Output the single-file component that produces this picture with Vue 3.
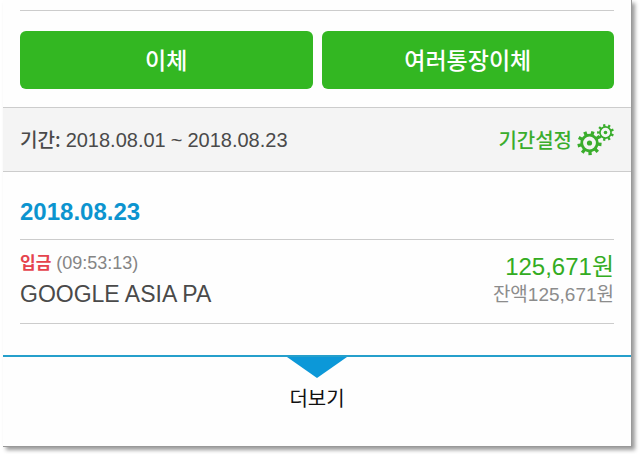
<script setup>
const period = { from: '2018.08.01', to: '2018.08.23' }

const days = [
  {
    date: '2018.08.23',
    items: [
      { type: '입금', time: '09:53:13', name: 'GOOGLE ASIA PA', amount: '125,671원', balance: '125,671원' },
    ],
  },
]

// Outline of a gear centred on (cx, cy), with flat-topped teeth.
function gear(cx, cy, outer, root, teeth, turn) {
  const step = (Math.PI * 2) / teeth
  const points = []
  for (let i = 0; i < teeth; i++) {
    const a = i * step + turn
    for (const [r, offset] of [[root, -0.25], [outer, -0.2], [outer, 0.2], [root, 0.25]]) {
      const t = a + offset * step
      points.push(`${(cx + r * Math.cos(t)).toFixed(2)} ${(cy + r * Math.sin(t)).toFixed(2)}`)
    }
  }
  return `M${points.join('L')}Z`
}

function hole(cx, cy, r) {
  return `M${cx - r} ${cy}a${r} ${r} 0 1 0 ${2 * r} 0a${r} ${r} 0 1 0 ${-2 * r} 0Z`
}

const bigGear = gear(12.5, 19, 12.2, 9.2, 9, 0.12) + hole(12.5, 19, 6.4)
const smallGear = gear(28.5, 8.5, 8.5, 6.4, 9, 0.35) + hole(28.5, 8.5, 4.7)
</script>

<template>
  <main class="card">
    <nav class="actions">
      <button type="button" class="action">이체</button>
      <button type="button" class="action">여러통장이체</button>
    </nav>

    <section class="filter">
      <p class="period">
        <strong>기간:</strong>
        <span>{{ period.from }}</span>
        <span>~</span>
        <span>{{ period.to }}</span>
      </p>
      <button type="button" class="settings">
        기간설정
        <svg class="gears" viewBox="0 0 37 32" aria-hidden="true">
          <path :d="bigGear" fill-rule="evenodd" />
          <circle cx="12.5" cy="19" r="2.6" />
          <path :d="smallGear" fill-rule="evenodd" />
          <circle cx="28.5" cy="8.5" r="1.8" />
        </svg>
      </button>
    </section>

    <section v-for="day in days" :key="day.date" class="day">
      <h2 class="date">{{ day.date }}</h2>
      <ul class="list">
        <li v-for="item in day.items" :key="item.time" class="item">
          <div class="detail">
            <p class="meta"><strong class="type">{{ item.type }}</strong> ({{ item.time }})</p>
            <p class="name">{{ item.name }}</p>
          </div>
          <div class="sums">
            <p class="amount">{{ item.amount }}</p>
            <p class="balance">잔액{{ item.balance }}</p>
          </div>
        </li>
      </ul>
    </section>

    <button type="button" class="more">
      <svg class="arrow" viewBox="0 0 60 21" aria-hidden="true">
        <path d="M0 0H60L30 21Z" />
      </svg>
      더보기
    </button>
  </main>
</template>

<style>
body {
  margin: 0;
  background: #fff;
}
</style>

<style scoped>
.card {
  margin: 0 8px 9px 3px;
  padding-top: 10px;
  background: #fefefe;
  border-right: 1px solid #999;
  border-bottom: 1px solid #999;
  box-shadow: 3px 3px 4px rgba(0, 0, 0, 0.4);
  color: #4a4a4a;
  font-family: "Liberation Sans", "Noto Sans CJK KR", sans-serif;
}

p,
h2,
ul {
  margin: 0;
  padding: 0;
}

button {
  border: 0;
  padding: 0;
  font-family: inherit;
  cursor: pointer;
}

.actions {
  display: grid;
  grid-template-columns: 1fr 1fr;
  gap: 9px;
  margin: 0 17px;
  padding: 20px 0 18px;
  border-top: 1px solid #ccc;
}

.action {
  height: 58px;
  padding-bottom: 2px;
  border-radius: 6px;
  background: #33b722;
  color: #fff;
  font-size: 23px;
  font-weight: 500;
}

.filter {
  display: flex;
  align-items: center;
  justify-content: space-between;
  height: 63px;
  padding: 0 17px;
  background: #f4f4f4;
  border-top: 1px solid #ccc;
  border-bottom: 1px solid #ccc;
}

.period {
  display: flex;
  align-items: baseline;
  gap: 5px;
  font-size: 20px;
  line-height: 30px;
}

.period strong {
  font-family: "Noto Sans CJK KR", sans-serif;
  font-size: 19px;
  font-weight: 500;
}

.settings {
  display: flex;
  align-items: center;
  gap: 5px;
  background: none;
  color: #3aad2c;
  font-size: 20px;
  font-weight: 500;
}

.gears {
  width: 37px;
  height: 32px;
  fill: currentColor;
}

.day {
  padding: 0 17px 31px;
}

.date {
  padding: 24px 0 11px;
  color: #0c94cf;
  font-size: 24px;
  line-height: 32px;
}

.list {
  border-top: 1px solid #ccc;
  list-style: none;
}

.item {
  display: flex;
  justify-content: space-between;
  padding: 8px 0 14px;
  border-bottom: 1px solid #ccc;
}

.meta {
  color: #858585;
  font-size: 18px;
  line-height: 30px;
}

.type {
  color: #e5444d;
  font-size: 17px;
}

.name {
  font-size: 23px;
  line-height: 30px;
}

.sums {
  text-align: right;
}

.amount {
  color: #33ac22;
  font-size: 24px;
  line-height: 38px;
}

.balance {
  color: #8c8c8c;
  font-size: 19px;
  line-height: 18px;
}

.more {
  display: flex;
  flex-direction: column;
  align-items: center;
  gap: 6px;
  width: 100%;
  padding-bottom: 32px;
  border-top: 2px solid #259fcb;
  background: none;
  color: #111;
  font-size: 20px;
  line-height: 30px;
}

.arrow {
  width: 60px;
  height: 21px;
  fill: #0c98d8;
}
</style>
